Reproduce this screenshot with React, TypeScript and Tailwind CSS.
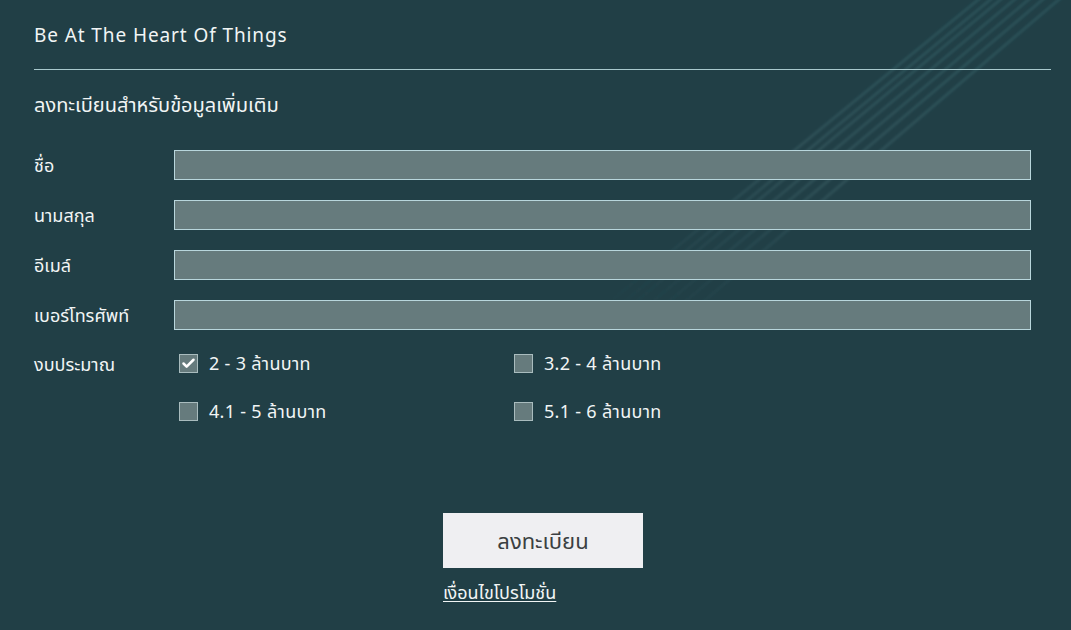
import { Check } from "lucide-react";

const fields = ["ชื่อ", "นามสกุล", "อีเมล์", "เบอร์โทรศัพท์"];

const budgets = [
    { label: "2 - 3 ล้านบาท", checked: true },
    { label: "3.2 - 4 ล้านบาท", checked: false },
    { label: "4.1 - 5 ล้านบาท", checked: false },
    { label: "5.1 - 6 ล้านบาท", checked: false },
];

function Streaks() {
    // เส้นแสงจาง ๆ มุมขวาบน
    return (
        <svg className="pointer-events-none absolute inset-0" width="1071" height="630" viewBox="0 0 1071 630">
            <defs>
                <linearGradient id="fade" x1="1" y1="0" x2="0" y2="1">
                    <stop offset="0" stopColor="#4a9aa0" stopOpacity="0.18" />
                    <stop offset="0.55" stopColor="#7fb4b8" stopOpacity="0.14" />
                    <stop offset="1" stopColor="#4a9aa0" stopOpacity="0" />
                </linearGradient>
                <filter id="soft">
                    <feGaussianBlur stdDeviation="1.2" />
                </filter>
            </defs>
            <g filter="url(#soft)">
                {[0, 12, 22, 36, 50, 64, 80].map((o) => (
                    <line key={o} x1={990 + o} y1={-10} x2={600 + o * 0.7} y2={310 + o * 0.4} stroke="url(#fade)" strokeWidth={3} />
                ))}
            </g>
        </svg>
    );
}

export default function App() {
    return (
        <div
            className="relative w-[1071px] h-[630px] overflow-hidden bg-[#213f46] text-[#f1f5f5]"
            style={{ fontFamily: '"Noto Sans", "Noto Sans Thai", "Open Sans", sans-serif' }}
        >
            <Streaks />
            <div className="relative pl-[34px] pr-[20px]">
                <h1 className="pt-[21px] h-[69px] text-[19px] tracking-[0.9px]">Be At The Heart Of Things</h1>
                <div className="h-px bg-[#a9c9cd]" />
                <h2 className="pt-[21px] text-[20px] leading-[28px]">ลงทะเบียนสำหรับข้อมูลเพิ่มเติม</h2>

                <div className="mt-[31px] flex flex-col gap-[20px] pr-[20px]">
                    {fields.map((f) => (
                        <div key={f} className="flex items-center">
                            <label className="w-[140px] text-[18px]">{f}</label>
                            <input className="h-[30px] flex-1 border border-[#b8d6dc] bg-[#667b7d] outline-none" />
                        </div>
                    ))}
                </div>

                <div className="mt-[20px] flex">
                    <div className="w-[140px] pt-[1px] text-[18px]">งบประมาณ</div>
                    <div className="grid grid-cols-[335px_200px] gap-y-[21px] pl-[5px]">
                        {budgets.map((b) => (
                            <label key={b.label} className="flex items-center gap-[11px] text-[18px] tracking-[0.3px]">
                                <span className="flex h-[19px] w-[19px] items-center justify-center border border-[#a9bcbe] bg-[#667b7d]">
                                    {b.checked && <Check className="size-[15px] text-white" strokeWidth={4} />}
                                </span>
                                {b.label}
                            </label>
                        ))}
                    </div>
                </div>

                <div className="mt-[88px] flex flex-col items-start pl-[409px]">
                    <button className="h-[55px] w-[200px] bg-[#efeff2] text-[22px] text-[#3b3f42]">ลงทะเบียน</button>
                    <a className="mt-[11px] text-[18px] underline underline-offset-2">เงื่อนไขโปรโมชั่น</a>
                </div>
            </div>
        </div>
    );
}
